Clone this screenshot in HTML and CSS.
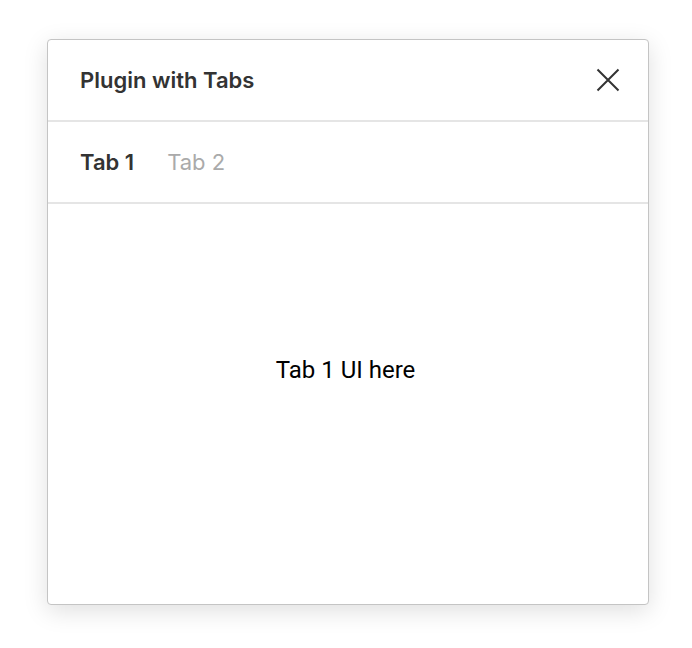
FILE: index.html
```html
<!DOCTYPE html>
<html>
<head>
<meta charset="utf-8">
<link rel="stylesheet" href="styles.css">
</head>
<body>
<div class="window">
  <div class="header">
    <div class="title">Plugin with Tabs</div>
    <button class="close" aria-label="Close">
      <svg width="24" height="24" viewBox="0 0 24 24"><path d="M1.5 1.5 L22.5 22.5 M22.5 1.5 L1.5 22.5" stroke="#333" stroke-width="2" fill="none"/></svg>
    </button>
  </div>
  <div class="tabs">
    <div class="tab active">Tab 1</div>
    <div class="tab">Tab 2</div>
  </div>
  <div class="content">
    <div class="content-text">Tab 1 UI here</div>
  </div>
</div>
</body>
</html>
```
FILE: styles.css
```css
html, body {
  margin: 0;
  padding: 0;
  background: #ffffff;
  min-height: 648px;
}
body {
  padding: 39px 0 0 47px;
  box-sizing: border-box;
}
.window {
  width: 600px;
  height: 564px;
  border: 1px solid #c4c4c4;
  border-radius: 4px;
  background: #fff;
  box-shadow: 0 6px 24px rgba(0,0,0,0.13);
  display: flex;
  flex-direction: column;
  font-family: Inter, "Noto Sans", sans-serif;
}
.header {
  height: 80px;
  border-bottom: 2px solid #e5e5e5;
  display: flex;
  align-items: center;
  justify-content: space-between;
  padding: 0 28px 0 32px;
}
.title {
  font-size: 22px;
  font-weight: 600;
  color: #333;
}
.close {
  border: none;
  background: none;
  padding: 0;
  width: 24px;
  height: 24px;
  display: flex;
}
.tabs {
  height: 80px;
  border-bottom: 2px solid #e5e5e5;
  display: flex;
  align-items: center;
  gap: 33px;
  padding-left: 32px;
}
.tab {
  font-size: 22px;
  color: #aaaaaa;
  font-weight: 400;
}
.tab.active {
  color: #333;
  font-weight: 600;
}
.content {
  flex: 1;
  display: flex;
  justify-content: center;
  padding-top: 152px;
  padding-right: 5px;
}
.content-text {
  font-family: Roboto, sans-serif;
  font-size: 24px;
  color: #000;
  line-height: 28px;
}
```
